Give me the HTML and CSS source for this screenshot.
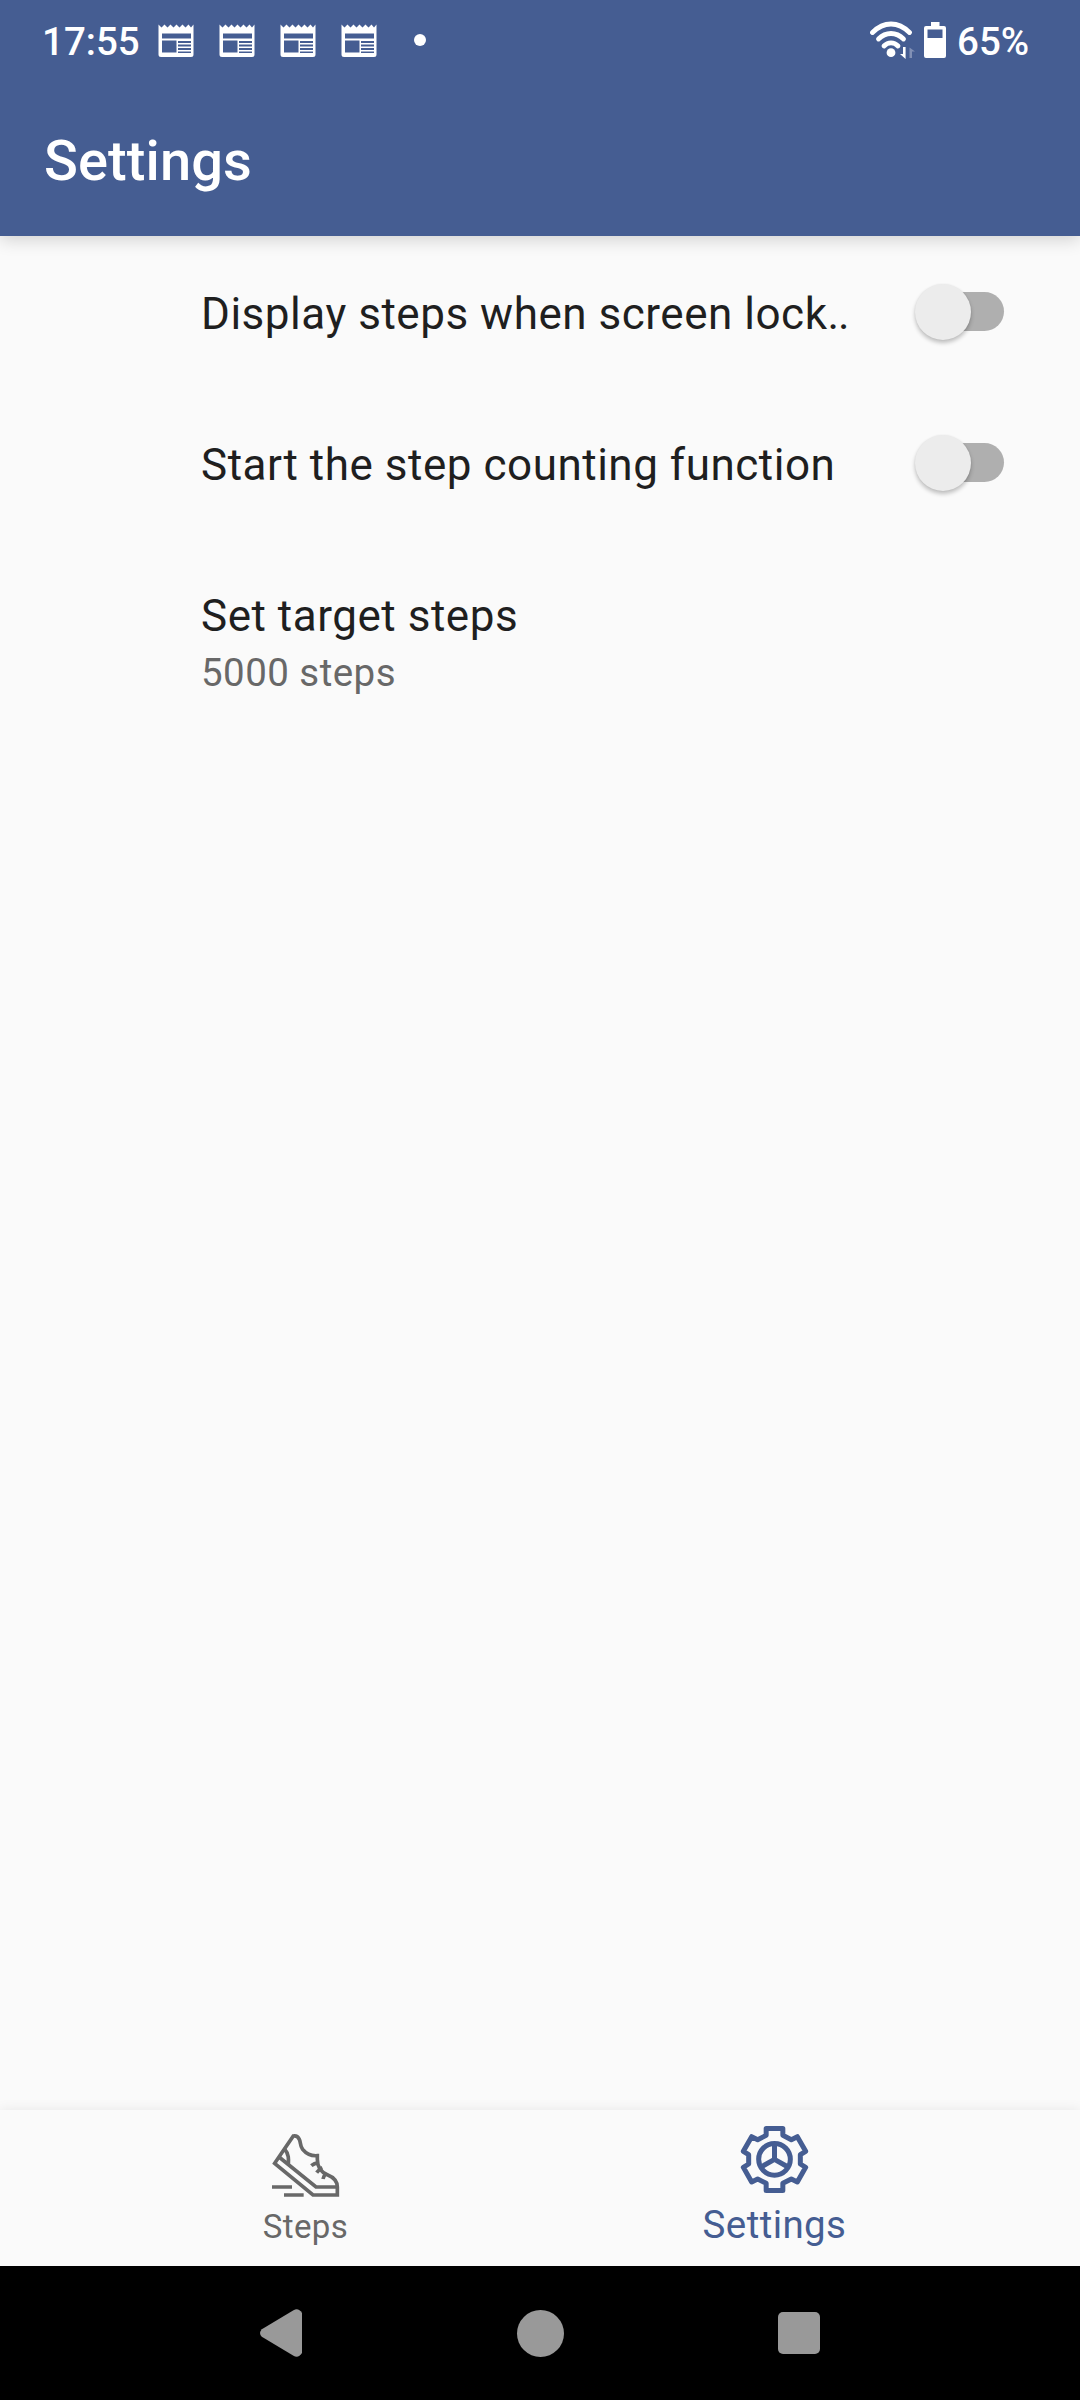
FILE: index.html
```html
<!DOCTYPE html>
<html lang="en">
<head>
<meta charset="utf-8">
<title>Settings</title>
<link rel="stylesheet" href="styles.css">
</head>
<body>
<svg class="symbols" aria-hidden="true">
  <symbol id="news" viewBox="0 0 36 34">
    <path fill="#fff" fill-rule="evenodd" d="M.5 .5 3.500 3.500 6.500 .5l3 3 3-3 3 3 3-3 3 3 3-3 3 3 3-3 2.500 3L35.500 .5V30.500a2.500 2.500 0 0 1-2.500 2.500H3A2.500 2.500 0 0 1 .5 30.500ZM4 9.500v5h29v-5ZM4 16.500v12h14.500V16.500ZM20 17v2h13v-2ZM20 20.500v2h13v-2ZM20 24v2h13v-2ZM20 27.500v1.500h13v-1.500Z"/>
  </symbol>
</svg>
<div class="screen">
  <header class="header">
    <div class="status">
      <span class="clock">17:55</span>
      <div class="notices">
        <svg class="news"><use href="#news"/></svg>
        <svg class="news"><use href="#news"/></svg>
        <svg class="news"><use href="#news"/></svg>
        <svg class="news"><use href="#news"/></svg>
        <span class="dot"></span>
      </div>
      <svg class="wifi" viewBox="0 0 46 40">
        <g fill="none" stroke="#fff" stroke-width="4.800" stroke-linecap="round">
          <path d="M2.500 12.500Q11 4 21 4t18.500 8.500"/>
          <path d="M8.500 19Q14 13.500 21 13.500T33.500 19"/>
          <path d="M14 26Q17 22.800 21 22.800T28 26"/>
        </g>
        <circle cx="21" cy="32.700" r="4.400" fill="#fff"/>
        <path fill="#fff" d="M33 27h2.600v12L30 34h3Z"/>
        <path fill="#8190b5" d="M39.500 38V27.500l5.500 4h-3V38Z"/>
      </svg>
      <svg class="battery" viewBox="0 0 22 36">
        <path fill="#fff" fill-rule="evenodd" d="M7 0h8.500v4H20a2 2 0 0 1 2 2v28a2 2 0 0 1-2 2H2a2 2 0 0 1-2-2V6a2 2 0 0 1 2-2h5ZM3.500 7.500v8.500h15V7.500Z"/>
      </svg>
      <span class="percent">65%</span>
    </div>
    <h1 class="title">Settings</h1>
  </header>
  <main class="list">
    <div class="item">
      <div class="label">Display steps when screen lock<span class="dots">..</span></div>
      <div class="switch"><span class="thumb"></span></div>
    </div>
    <div class="item">
      <div class="label">Start the step counting function</div>
      <div class="switch"><span class="thumb"></span></div>
    </div>
    <div class="item">
      <div class="texts">
        <div class="label">Set target steps</div>
        <div class="summary">5000 steps</div>
      </div>
    </div>
  </main>
  <nav class="tabs">
    <a class="tab steps">
      <svg class="shoe" viewBox="60 60 216 210">
        <g fill="none" stroke="#686868" stroke-width="11">
          <path d="M74 160 130 78Q142 76 148 88C153 98 149 106 158 118Q175 139 202 137V148C202 172 211 186 232 194Q262 206 262 231V255H189Z"/>
          <path d="M87 141 198 231H262M104 118C117 132 116 148 115 164"/>
          <path d="M184 167Q192 160 206 158M200 188Q208 177 217 173M219 207Q221 197 229 190"/>
          <path d="M66 231H126M102 255H161"/>
        </g>
      </svg>
      <span class="tab-label">Steps</span>
    </a>
    <a class="tab active">
      <svg class="gear" viewBox="180 105 207 207">
        <g fill="none" stroke="#455d92" stroke-width="15">
          <path stroke-linejoin="round" d="M258.500 115.500H308.500V136L334 149 352 140 377 184 361 194V222L377 232 352 276 334 267 308.500 280V301.500H258.500V280L233 267 215 276 190 232 206 222V194L190 184 215 140 233 149 258.500 136Z"/>
          <circle cx="283.500" cy="208" r="47.500"/>
          <path d="M283.500 160V208L243 231M283.500 208 324 231"/>
        </g>
      </svg>
      <span class="tab-label">Settings</span>
    </a>
  </nav>
  <footer class="system">
    <svg class="back" viewBox="0 0 42 48"><path fill="#999" d="M1.800 20.200 33.500 1.200Q38.500-1.500 42 4V44q-3.500 5.500-8.500 2.800L1.800 27.800Q-1.800 24 1.800 20.200Z"/></svg>
    <span class="home"></span>
    <span class="recent"></span>
  </footer>
</div>
</body>
</html>
```
FILE: styles.css
```css
* { box-sizing: border-box; }
body {
  margin: 0;
  background: #fafafa;
  font-family: Roboto, "Liberation Sans", sans-serif;
}
svg { display: block; flex: none; }
.symbols { width: 0; height: 0; position: absolute; }
.screen {
  width: 1080px;
  height: 2400px;
  display: flex;
  flex-direction: column;
  overflow: hidden;
}
.header {
  height: 236px;
  background: #455d92;
  color: #fff;
  box-shadow: 0 4px 16px rgba(0, 0, 0, .16);
}
.status {
  height: 82px;
  display: flex;
  align-items: flex-start;
  padding-left: 42px;
  font-size: 38.500px;
  font-weight: 500;
  line-height: 46px;
}
.clock { width: 116px; margin-top: 19px; white-space: nowrap; }
.notices { display: flex; gap: 25px; margin-top: 24px; width: 712px; }
.news { width: 36px; height: 34px; }
.dot {
  width: 12px;
  height: 12px;
  margin: 10px 0 0 12px;
  border-radius: 50%;
  background: #fff;
}
.wifi { width: 46px; height: 40px; margin: 20px 8px 0 0; }
.battery { width: 22px; height: 36px; margin-top: 22px; }
.percent { margin: 19px 0 0 11px; white-space: nowrap; }
.title {
  margin: 47px 0 0 44px;
  font-size: 56px;
  font-weight: 500;
  line-height: 64px;
  letter-spacing: .1px;
}
.list { flex: 1; }
.item {
  height: 151px;
  display: flex;
  justify-content: space-between;
  padding: 0 76px 0 201px;
}
.label {
  margin-top: 52px;
  font-size: 44px;
  line-height: 52px;
  letter-spacing: .52px;
  color: #1f1f1f;
  white-space: nowrap;
}
.dots { letter-spacing: -1px; }
.summary {
  margin-top: 8px;
  font-size: 38.500px;
  line-height: 45px;
  letter-spacing: .45px;
  color: #686868;
}
.switch {
  width: 85px;
  height: 39px;
  margin-top: 56px;
  border-radius: 20px;
  background: #afafaf;
}
.thumb {
  display: block;
  width: 56px;
  height: 56px;
  margin: -8px 0 0 -4.500px;
  border-radius: 50%;
  background: #ececec;
  box-shadow: 0 3px 4px rgba(0, 0, 0, .24), 0 0 2px rgba(0, 0, 0, .06);
}
.tabs {
  height: 156px;
  display: flex;
  justify-content: center;
  background: #fafafa;
  box-shadow: 0 0 12px rgba(0, 0, 0, .08);
}
.tab {
  width: 469px;
  display: flex;
  flex-direction: column;
  align-items: center;
  color: #686868;
}
.shoe { width: 72px; height: 70px; margin: 20px 0 0 1px; }
.gear { width: 69px; height: 69px; margin-top: 15px; }
.tab-label { font-size: 33px; line-height: 38px; margin-top: 8px; letter-spacing: .4px; }
.active { color: #455d92; }
.active .tab-label { font-size: 38.500px; line-height: 46px; margin-top: 8px; letter-spacing: .4px; }
.system {
  height: 134px;
  display: flex;
  align-items: center;
  justify-content: space-between;
  padding: 0 260px;
  background: #000;
}
.back { width: 42px; height: 48px; }
.home { width: 47px; height: 47px; border-radius: 50%; background: #999; }
.recent { width: 42px; height: 42px; border-radius: 5px; background: #999; }
```
